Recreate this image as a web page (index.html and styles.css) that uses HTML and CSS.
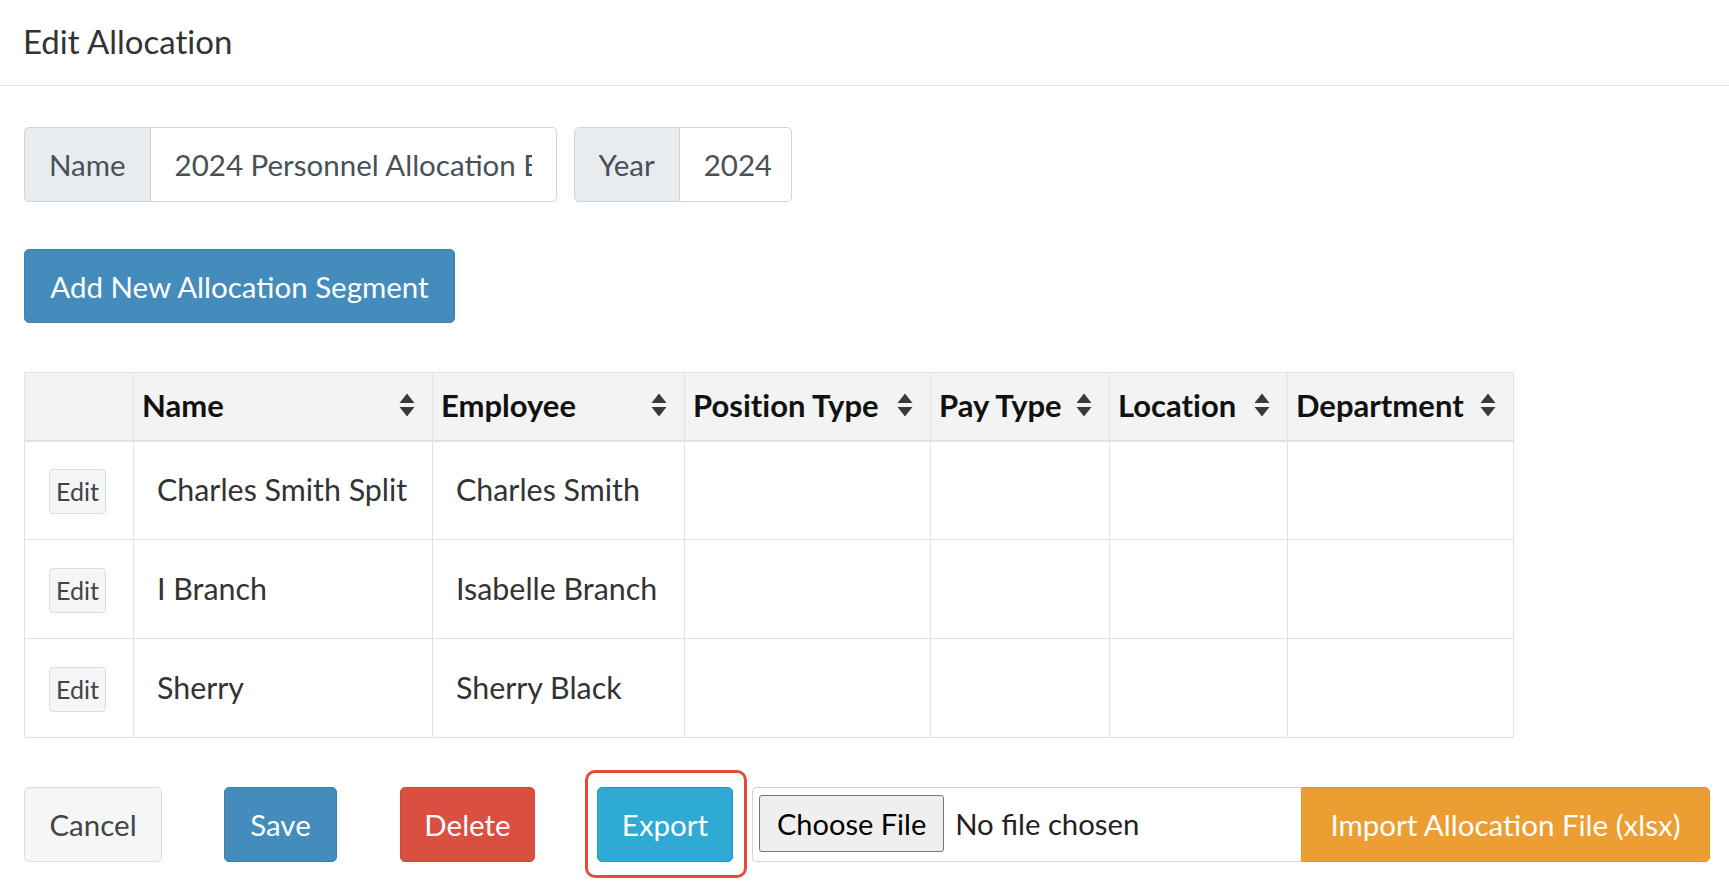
FILE: index.html
```html
<!DOCTYPE html>
<html lang="en">
<head>
<meta charset="utf-8">
<title>Edit Allocation</title>
<link rel="stylesheet" href="styles.css">
</head>
<body>
<div class="box">
  <div class="box-header">
    <h3 class="box-title">Edit Allocation</h3>
  </div>
  <div class="box-body">
    <div class="input-row">
      <div class="input-group">
        <span class="addon">Name</span>
        <input class="form-input name-input" type="text" value="2024 Personnel Allocation Budget">
      </div>
      <div class="input-group">
        <span class="addon">Year</span>
        <input class="form-input year-input" type="text" value="2024">
      </div>
    </div>

    <button class="btn btn-primary btn-add" type="button">Add New Allocation Segment</button>

    <table class="data-table">
      <colgroup>
        <col class="c-edit"><col class="c-name"><col class="c-emp"><col class="c-pos">
        <col class="c-pay"><col class="c-loc"><col class="c-dep">
      </colgroup>
      <thead>
        <tr>
          <th></th>
          <th><div class="th-inner"><span>Name</span><svg class="sort" viewBox="0 0 16 24"><path d="M8 0.5 L15.5 10 H0.5 Z M0.5 14 H15.5 L8 23.5 Z"/></svg></div></th>
          <th><div class="th-inner"><span>Employee</span><svg class="sort" viewBox="0 0 16 24"><path d="M8 0.5 L15.5 10 H0.5 Z M0.5 14 H15.5 L8 23.5 Z"/></svg></div></th>
          <th><div class="th-inner"><span>Position Type</span><svg class="sort" viewBox="0 0 16 24"><path d="M8 0.5 L15.5 10 H0.5 Z M0.5 14 H15.5 L8 23.5 Z"/></svg></div></th>
          <th><div class="th-inner"><span>Pay Type</span><svg class="sort" viewBox="0 0 16 24"><path d="M8 0.5 L15.5 10 H0.5 Z M0.5 14 H15.5 L8 23.5 Z"/></svg></div></th>
          <th><div class="th-inner"><span>Location</span><svg class="sort" viewBox="0 0 16 24"><path d="M8 0.5 L15.5 10 H0.5 Z M0.5 14 H15.5 L8 23.5 Z"/></svg></div></th>
          <th><div class="th-inner"><span>Department</span><svg class="sort" viewBox="0 0 16 24"><path d="M8 0.5 L15.5 10 H0.5 Z M0.5 14 H15.5 L8 23.5 Z"/></svg></div></th>
        </tr>
      </thead>
      <tbody>
        <tr>
          <td class="cell-edit"><button class="btn-edit" type="button">Edit</button></td>
          <td>Charles Smith Split</td>
          <td>Charles Smith</td>
          <td></td><td></td><td></td><td></td>
        </tr>
        <tr>
          <td class="cell-edit"><button class="btn-edit" type="button">Edit</button></td>
          <td>I Branch</td>
          <td>Isabelle Branch</td>
          <td></td><td></td><td></td><td></td>
        </tr>
        <tr>
          <td class="cell-edit"><button class="btn-edit" type="button">Edit</button></td>
          <td>Sherry</td>
          <td>Sherry Black</td>
          <td></td><td></td><td></td><td></td>
        </tr>
      </tbody>
    </table>

    <div class="actions">
      <button class="btn btn-default btn-cancel" type="button">Cancel</button>
      <button class="btn btn-primary btn-save" type="button">Save</button>
      <button class="btn btn-danger btn-delete" type="button">Delete</button>
      <button class="btn btn-info btn-export" type="button">Export</button>
      <div class="file-group">
        <input class="file-input" type="file">
        <button class="btn btn-warning btn-import" type="button">Import Allocation File (xlsx)</button>
      </div>
    </div>
  </div>
</div>
</body>
</html>
```
FILE: styles.css
```css
* { box-sizing: border-box; }

html { overflow: hidden; }

body {
  margin: 0;
  background: #fff;
  color: #333;
  font-family: Lato, "Noto Sans", sans-serif;
  font-variant-ligatures: none;
}

.box-header {
  padding: 25px 23px 28px;
  border-bottom: 1px solid #e4e4e4;
}

.box-title {
  margin: 0;
  font-size: 33px;
  line-height: 32px;
  font-weight: 400;
  color: #333;
}

.box-body {
  padding: 41px 24px 24px;
}

/* input groups */
.input-row {
  display: flex;
  gap: 17px;
}

.input-group {
  display: flex;
  height: 75px;
}

.addon {
  display: flex;
  align-items: center;
  padding: 0 24px;
  background: #e9ecef;
  border: 1px solid #ced4da;
  border-radius: 5px 0 0 5px;
  font-size: 29.5px;
  color: #495057;
}

.form-input {
  height: 75px;
  margin: 0;
  padding: 0 24px;
  border: 1px solid #ced4da;
  border-left: 0;
  border-radius: 0 5px 5px 0;
  font-family: Lato, "Noto Sans", sans-serif;
  font-size: 29.5px;
  color: #495057;
  background: #fff;
  outline: none;
}

.name-input { width: 406px; }
.year-input { width: 112px; padding: 0 20px 0 24px; }

/* buttons */
.btn {
  display: inline-flex;
  flex: none;
  align-items: center;
  justify-content: center;
  height: 75px;
  margin: 0;
  padding: 0 20px;
  border: 1px solid transparent;
  border-radius: 5px;
  font-family: Lato, "Noto Sans", sans-serif;
  font-size: 29.5px;
  color: #fff;
  cursor: pointer;
}

.btn-primary { background: #438cbb; border-color: #3b80ae; }
.btn-danger { background: #da4f40; border-color: #cf4536; }
.btn-info { background: #2eaad4; border-color: #2896bd; }
.btn-warning { background: #ed9e32; border-color: #e3942a; }
.btn-default { background: #f5f6f8; border-color: #dcdcdc; color: #444; }

.btn-add {
  display: flex;
  width: 431px;
  height: 74px;
  margin-top: 47px;
}

/* table */
.data-table {
  margin-top: 49px;
  width: 1489px;
  table-layout: fixed;
  border-collapse: collapse;
  border: 1px solid #dfe3e8;
}

.c-edit { width: 109px; }
.c-name { width: 299px; }
.c-emp { width: 252px; }
.c-pos { width: 246px; }
.c-pay { width: 179px; }
.c-loc { width: 178px; }
.c-dep { width: 226px; }

.data-table th {
  height: 68px;
  padding: 0 17px 2px 8px;
  background: #f3f3f3;
  border: 1px solid #dfe3e8;
  border-bottom-width: 2px;
  text-align: left;
  font-size: 31px;
  font-weight: 700;
  color: #111;
  white-space: nowrap;
}

.th-inner {
  display: flex;
  align-items: center;
  justify-content: space-between;
}

.sort {
  width: 16px;
  height: 24px;
  flex: none;
  fill: #3a3a3a;
}

.data-table td {
  height: 99px;
  padding: 0 10px 3px 23px;
  border: 1px solid #dfe3e8;
  font-size: 30.4px;
  color: #333;
  vertical-align: middle;
}

.data-table td.cell-edit {
  padding: 2px 0 0 24px;
}

.btn-edit {
  display: block;
  width: 57px;
  height: 45px;
  padding: 0;
  border: 1px solid #dcdcdc;
  border-radius: 4px;
  background: #f5f6f8;
  font-family: Lato, "Noto Sans", sans-serif;
  font-size: 25px;
  color: #444;
}

/* bottom actions */
.actions {
  display: flex;
  align-items: center;
  margin-top: 49px;
}

.btn-cancel { width: 138px; }
.btn-save { width: 113px; margin-left: 62px; }
.btn-delete { width: 135px; margin-left: 63px; }
.btn-export { width: 136px; margin-left: 62px; position: relative; }

.btn-export::after {
  content: "";
  position: absolute;
  left: -13px;
  right: -15px;
  top: -18px;
  bottom: -17px;
  border: 3px solid #e24d3a;
  border-radius: 10px;
}

.file-group {
  display: flex;
  flex: none;
  margin-left: 19px;
}

.file-input {
  flex: none;
  width: 549px;
  height: 75px;
  margin: 0;
  padding: 7px 6px;
  border: 1px solid #ced4da;
  border-right: 0;
  border-radius: 5px 0 0 5px;
  font-family: Lato, "Noto Sans", sans-serif;
  font-size: 29.3px;
  color: #222;
  background: #fff;
}

.file-input::file-selector-button {
  height: 57px;
  margin-right: 11px;
  padding: 0 17px;
  border: 1px solid #767676;
  border-radius: 3px;
  background: #efefef;
  font-family: Lato, "Noto Sans", sans-serif;
  font-size: 29px;
  color: #000;
}

.btn-import {
  width: 409px;
  border-radius: 0 5px 5px 0;
}
```
